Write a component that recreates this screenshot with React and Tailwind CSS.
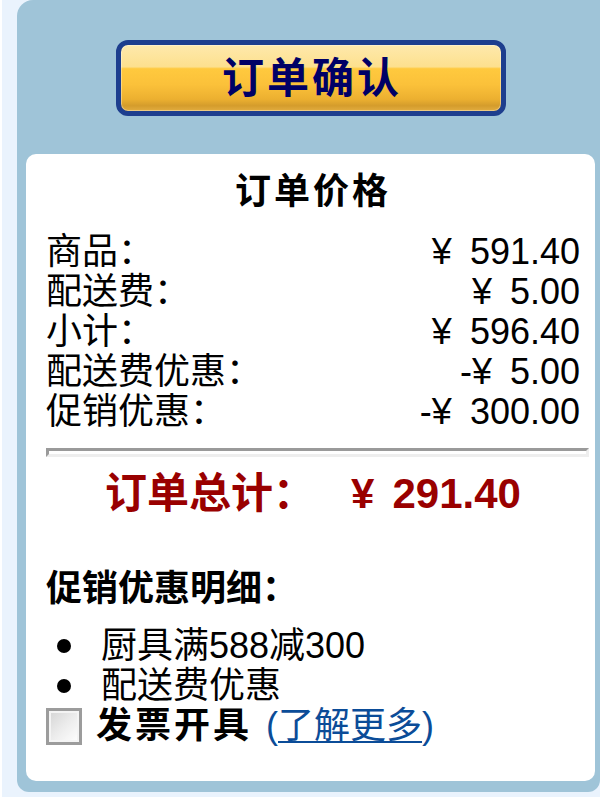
import React from "react";

const F = "font-['Liberation_Sans','Noto_Sans_CJK_SC',sans-serif]";

function Row({ label, sign, value }) {
  return (
    <div className="flex justify-between h-[40px] leading-[40px] text-[36px] text-black">
      <span>{label}</span>
      <span className="flex">
        <span>{sign}¥</span>
        <span className="ml-[18px]">{value}</span>
      </span>
    </div>
  );
}

export default function App() {
  return (
    <div className={`${F} w-[600px] h-[797px] overflow-hidden bg-[#eaf3fd] border-l-[2px] border-white pl-[15px] pb-[5px]`}>
      <div className="h-[792px] bg-[#9fc4d8] rounded-tl-[16px] rounded-bl-[12px] rounded-br-[12px] pl-[9px] pr-[5px] pt-[40px] pb-[11px] flex flex-col">
        <div className="flex justify-center">
          <button className="w-[390px] h-[76px] rounded-[12px] border-[5px] border-[#1d3e8e] bg-[linear-gradient(to_bottom,#fee9ac_0%,#fde08e_33%,#ffc93e_36%,#fbc13a_60%,#ecb030_82%,#d49c2c_92%,#e2ad40_100%)] shadow-[inset_0_0_0_1px_rgba(255,255,255,0.35)] flex items-center justify-center">
            <span className="text-[42px] leading-[42px] font-bold text-[#000066] tracking-[3px] pl-[3px] pt-[2px]">订单确认</span>
          </button>
        </div>
        <div className="mt-[38px] flex-1 bg-white rounded-[10px] pl-[20px] pr-[15px] pt-[18px]">
          <div className="text-center text-[36px] leading-[40px] font-bold text-black tracking-[3px]">订单价格</div>
          <div className="mt-[20px]">
            <Row label="商品：" sign="" value="591.40" />
            <Row label="配送费：" sign="" value="5.00" />
            <Row label="小计：" sign="" value="596.40" />
            <Row label="配送费优惠：" sign="-" value="5.00" />
            <Row label="促销优惠：" sign="-" value="300.00" />
          </div>
          <div className="mt-[16px] mr-[-9px] h-[9px] border-t-[3px] border-l-[3px] border-b-[3px] border-r-[3px] border-t-[#9a9a9a] border-l-[#9a9a9a] border-b-[#eeeeee] border-r-[#eeeeee]"></div>
          <div className="mt-[14px] flex justify-center text-[42px] leading-[46px] font-bold text-[#990000]">
            <span>订单总计：</span>
            <span className="ml-[36px]">¥</span>
            <span className="ml-[18px]">291.40</span>
          </div>
          <div className="mt-[52px] text-[36px] leading-[40px] font-bold text-black">促销优惠明细：</div>
          <ul className="mt-[17px] text-[36px] leading-[40px] text-black">
            <li className="flex items-center">
              <span className="w-[14px] h-[14px] rounded-full bg-black ml-[11px] mr-[30px]"></span>
              <span>厨具满588减300</span>
            </li>
            <li className="flex items-center">
              <span className="w-[14px] h-[14px] rounded-full bg-black ml-[11px] mr-[30px]"></span>
              <span>配送费优惠</span>
            </li>
          </ul>
          <div className="mt-[0px] flex items-center h-[40px]">
            <span className="w-[36px] h-[37px] border-[3px] border-[#9c9c9c] bg-[linear-gradient(135deg,#d4d4d4_0%,#ececec_50%,#ffffff_100%)] shadow-[inset_0_0_0_2px_#f4f4f4]"></span>
            <span className="ml-[14px] text-[36px] leading-[40px] font-bold text-black tracking-[3px]">发票开具</span>
            <span className="ml-[14px] text-[36px] leading-[40px] text-[#0b4c98]">
              (<span className="underline decoration-[2px] underline-offset-[3px]">了解更多</span>)
            </span>
          </div>
        </div>
      </div>
    </div>
  );
}
